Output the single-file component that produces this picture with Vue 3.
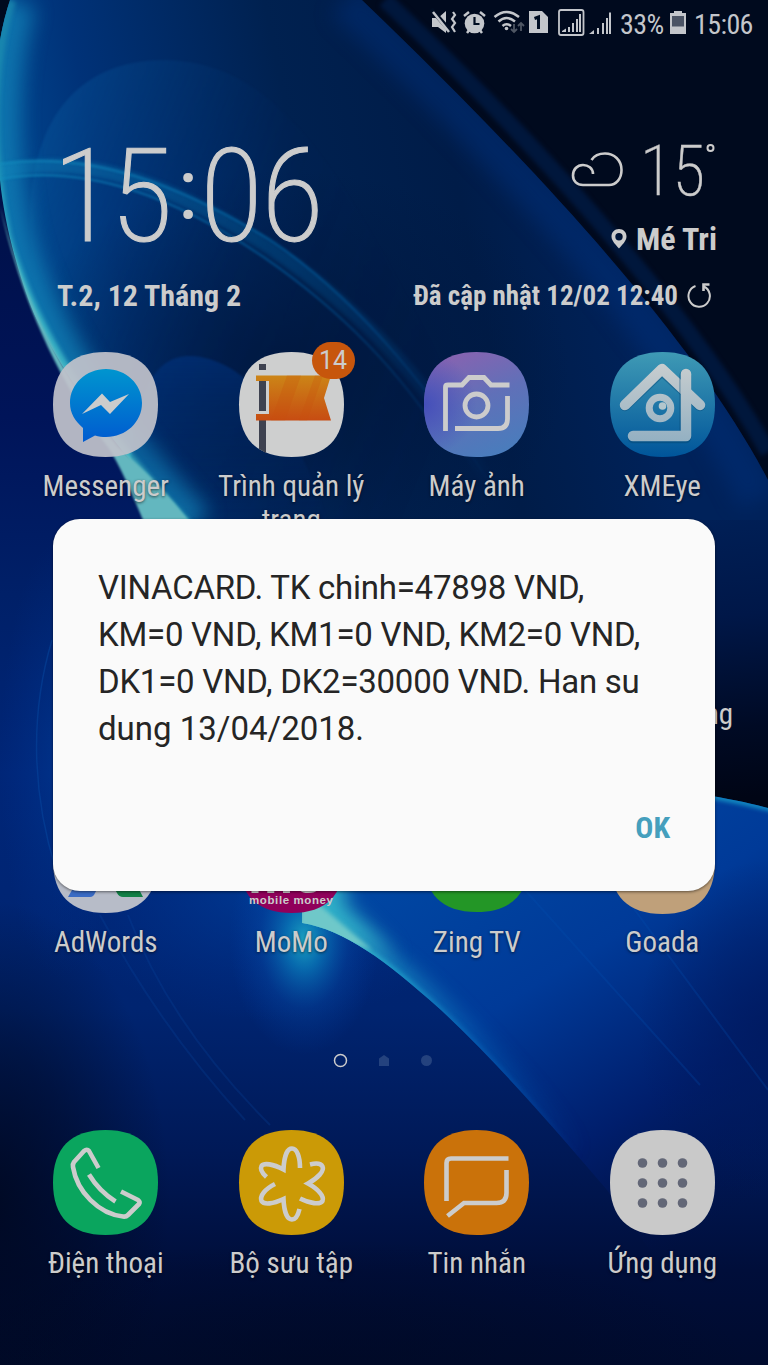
<script setup>
const SQ = 'M52.5 0C87 0 105 18 105 52.5S87 105 52.5 105 0 87 0 52.5 18 0 52.5 0Z'
const dots = [-20, 0, 20]
</script>

<template>
  <div class="phone">
    <svg class="wallpaper" width="768" height="1365" viewBox="0 0 768 1365" aria-hidden="true">
      <defs>
        <linearGradient id="lens" gradientUnits="userSpaceOnUse" x1="0" y1="240" x2="600" y2="120">
          <stop offset="0" stop-color="#004a94" /><stop offset=".18" stop-color="#003278" />
          <stop offset=".5" stop-color="#002150" /><stop offset=".75" stop-color="#001c48" /><stop offset="1" stop-color="#00225a" />
        </linearGradient>
        <linearGradient id="low" gradientUnits="userSpaceOnUse" x1="0" y1="180" x2="0" y2="1365">
          <stop offset="0" stop-color="#001048" /><stop offset=".2" stop-color="#001459" /><stop offset=".35" stop-color="#002068" />
          <stop offset=".5" stop-color="#002678" /><stop offset=".7" stop-color="#002470" />
          <stop offset=".82" stop-color="#001957" /><stop offset=".92" stop-color="#000e3a" /><stop offset="1" stop-color="#000b2e" />
        </linearGradient>
        <linearGradient id="strip" gradientUnits="userSpaceOnUse" x1="700" y1="520" x2="730" y2="800">
          <stop offset="0" stop-color="#001f56" /><stop offset=".35" stop-color="#001748" /><stop offset=".75" stop-color="#000a24" /><stop offset="1" stop-color="#000515" />
        </linearGradient>
        <linearGradient id="wave" gradientUnits="userSpaceOnUse" x1="400" y1="880" x2="640" y2="1270">
          <stop offset="0" stop-color="#0046a2" /><stop offset=".35" stop-color="#003a98" />
          <stop offset=".7" stop-color="#001e6c" /><stop offset="1" stop-color="#001048" stop-opacity="0" />
        </linearGradient>
        <linearGradient id="edge" gradientUnits="userSpaceOnUse" x1="310" y1="930" x2="580" y2="1160">
          <stop offset="0" stop-color="#4cc6cf" /><stop offset=".25" stop-color="#1f9cc8" /><stop offset=".55" stop-color="#0766b8" stop-opacity=".7" /><stop offset="1" stop-color="#0048a8" stop-opacity="0" />
        </linearGradient>
        <linearGradient id="rim" gradientUnits="userSpaceOnUse" x1="0" y1="0" x2="0" y2="530">
          <stop offset="0" stop-color="#1a86ac" stop-opacity=".8" /><stop offset=".25" stop-color="#1d93b4" stop-opacity=".8" /><stop offset=".5" stop-color="#37b0c4" /><stop offset="1" stop-color="#3fb4c2" />
        </linearGradient>
        <linearGradient id="arc" gradientUnits="userSpaceOnUse" x1="0" y1="170" x2="520" y2="480">
          <stop offset="0" stop-color="#1490c0" /><stop offset=".5" stop-color="#0068ac" stop-opacity=".8" /><stop offset="1" stop-color="#004a90" stop-opacity="0" />
        </linearGradient>
        <radialGradient id="glow"><stop offset="0" stop-color="#1fb0c8" /><stop offset=".25" stop-color="#0a82c0" stop-opacity=".8" /><stop offset=".6" stop-color="#0650b0" stop-opacity=".35" /><stop offset="1" stop-color="#0040a8" stop-opacity="0" /></radialGradient>
        <radialGradient id="halo"><stop offset="0" stop-color="#0048a8" stop-opacity=".7" /><stop offset="1" stop-color="#0038a0" stop-opacity="0" /></radialGradient>
        <radialGradient id="night"><stop offset="0" stop-color="#000820" stop-opacity=".9" /><stop offset=".5" stop-color="#000820" stop-opacity=".5" /><stop offset="1" stop-color="#000820" stop-opacity="0" /></radialGradient>
        <radialGradient id="navy"><stop offset="0" stop-color="#001a60" stop-opacity=".8" /><stop offset="1" stop-color="#001a60" stop-opacity="0" /></radialGradient>
        <radialGradient id="shade"><stop offset="0" stop-color="#00173e" /><stop offset="1" stop-color="#00173e" stop-opacity="0" /></radialGradient>
        <linearGradient id="inner" x1="0" y1="0" x2="1" y2=".4"><stop offset="0" stop-color="#0a62a8" stop-opacity=".45" /><stop offset=".5" stop-color="#002a66" stop-opacity=".1" /><stop offset="1" stop-color="#001a44" stop-opacity="0" /></linearGradient>
        <linearGradient id="bump" x1="0" y1="0" x2="0" y2="1"><stop offset="0" stop-color="#00388a" stop-opacity=".5" /><stop offset="1" stop-color="#002a66" stop-opacity="0" /></linearGradient>
        <clipPath id="lensClip"><path d="M10 0C-10 60 -12 150 5 235C30 330 90 420 190 530H768V480C700 350 560 190 362 0Z" /></clipPath>
        <clipPath id="waveClip"><path d="M302 860V923C345 930 385 960 441 1010C500 1065 560 1135 607 1190C650 1250 700 1320 720 1365H768V808C750 803 730 799 700 794V860Z" /></clipPath>
        <filter id="b1" color-interpolation-filters="sRGB"><feGaussianBlur stdDeviation=".8" /></filter>
        <filter id="b2" x="-20%" y="-20%" width="140%" height="140%" color-interpolation-filters="sRGB"><feGaussianBlur stdDeviation="2" /></filter>
        <filter id="b8" x="-40%" y="-40%" width="180%" height="180%" color-interpolation-filters="sRGB"><feGaussianBlur stdDeviation="10" /></filter>
      </defs>
      <rect width="768" height="1365" fill="#000a1e" />
      <path d="M0 180H190V350H700V700H768V1365H0Z" fill="url(#low)" />
      <path d="M362 0C560 190 700 350 768 480V530H768V0Z" fill="#000a1e" />
      <path d="M385 0C560 165 700 330 768 452" fill="none" stroke="#00173c" stroke-width="16" filter="url(#b2)" />
      <path d="M10 0C-10 60 -12 150 5 235C30 330 90 420 190 530H768V480C700 350 560 190 362 0Z" fill="url(#lens)" />
      <g clip-path="url(#lensClip)">
        <path d="M345 0C545 190 685 350 758 500" fill="none" stroke="#00307a" stroke-width="40" opacity=".5" filter="url(#b8)" />
        <ellipse cx="290" cy="370" rx="280" ry="200" fill="url(#shade)" />
        <path d="M30 230C28 130 70 60 165 60C270 62 330 150 430 340L520 530H160C80 460 32 340 30 230Z" fill="url(#inner)" filter="url(#b1)" />
        <path d="M10 0C-10 60 -12 150 5 235C30 330 90 420 190 530" fill="none" stroke="#1283b8" stroke-width="54" opacity=".75" filter="url(#b8)" />
        <path d="M10 0C-10 60 -12 150 5 235C30 330 90 420 190 530" fill="none" stroke="url(#rim)" stroke-width="12" filter="url(#b2)" />
        <path d="M0 172C90 150 180 190 270 248C360 310 430 380 500 500" fill="none" stroke="url(#arc)" stroke-width="14" opacity=".4" filter="url(#b2)" />
        <path d="M0 164C90 150 180 185 270 240C360 300 440 400 500 500M0 179C90 163 180 200 265 258C340 310 400 370 450 450" fill="none" stroke="url(#arc)" stroke-width="2.500" opacity=".6" filter="url(#b1)" />
        <path d="M128 530C128 400 150 356 190 356C250 358 300 430 330 530Z" fill="url(#bump)" filter="url(#b1)" />
      </g>
      <rect x="700" y="520" width="68" height="290" fill="url(#strip)" />
      <path d="M0 180C8 260 45 365 110 450C122 470 134 498 147 522L100 560H0Z" fill="url(#low)" />
      <path d="M0 205C12 265 45 365 110 450C122 470 134 498 147 530H196C170 495 140 465 118 447C60 375 20 290 0 205Z" fill="#63b7bf" filter="url(#b1)" />
      <ellipse cx="60" cy="760" rx="60" ry="220" fill="url(#halo)" opacity=".5" />
      <path d="M52 640C28 720 34 800 56 870" fill="none" stroke="#0648a0" stroke-width="1.500" opacity=".5" />
      <ellipse cx="270" cy="890" rx="220" ry="130" fill="url(#halo)" opacity=".8" />
      <ellipse cx="304" cy="940" rx="75" ry="115" fill="url(#glow)" opacity=".9" />
      <path d="M302 860V923C345 930 385 960 441 1010C500 1065 560 1135 607 1190C650 1250 700 1320 720 1365H768V808C750 803 730 799 700 794V860Z" fill="url(#wave)" />
      <g clip-path="url(#waveClip)">
        <path d="M302 923C345 930 385 960 441 1010C500 1065 560 1135 607 1190" fill="none" stroke="url(#edge)" stroke-width="22" opacity=".75" filter="url(#b8)" />
        <path d="M302 923C345 930 385 960 441 1010C500 1065 560 1135 607 1190" fill="none" stroke="url(#edge)" stroke-width="5" filter="url(#b2)" />
        <path d="M298 860H345L345 905L395 955L304 925Z" fill="#2fb0c8" filter="url(#b8)" />
        <path d="M300 865L320 905L372 950L300 928Z" fill="#6fc8c9" filter="url(#b2)" />
        <path d="M700 794C730 799 750 803 780 811" fill="none" stroke="#128bc2" stroke-width="6" filter="url(#b2)" />
        <ellipse cx="768" cy="1030" rx="130" ry="170" fill="url(#navy)" />
        <path d="M525 890L700 1085M620 890L768 1090" stroke="#0050b0" stroke-width="2" opacity=".25" />
      </g>
      <path d="M100 915C140 990 190 1060 245 1120M128 915C160 1000 215 1070 270 1125" fill="none" stroke="#0648a0" stroke-width="2" opacity=".25" />
      <ellipse cx="-10" cy="1200" rx="180" ry="300" fill="url(#night)" />
      <ellipse cx="330" cy="1370" rx="420" ry="130" fill="url(#night)" opacity=".6" />
    </svg>

    <header class="status">
      <svg width="186" height="30" viewBox="430 8 186 30" fill="#c3c6cb">
        <path d="M432 18h6l8-7v22l-8-6h-6z" />
        <path d="M431 9l21 24" stroke="#000d22" stroke-width="4.500" /><path d="M433 12l16 20" stroke="#c3c6cb" stroke-width="2.500" />
        <path d="M453 12l2 3-3 4 3 4-3 4 3 5" fill="none" stroke="#c3c6cb" stroke-width="2.200" />
        <circle cx="474.500" cy="23.500" r="9.800" /><path d="M464 16l5-4M485 16l-5-4M467 33l3-4M482 33l-3-4" stroke="#c3c6cb" stroke-width="2.500" /><path d="M474.500 17v7h5" fill="none" stroke="#000d22" stroke-width="2.200" />
        <g fill="none" stroke="#c3c6cb" stroke-width="2.500"><path d="M494.500 17q12-10 24.500 0M498.500 21.500q8-7 16.500 0M502.500 26q4-3.500 8.500 0" /></g><circle cx="506.500" cy="28.500" r="1.800" />
        <path d="M514 24v8m-3-3l3 3 3-3M521 31v-8m-3 3l3-3 3 3" fill="none" stroke="#4e5663" stroke-width="1.800" />
        <path d="M529 11h13l6 6v16h-19z" /><path d="M534.500 18.500l4-1.500v12" fill="none" stroke="#000d22" stroke-width="3" />
        <rect x="559" y="10" width="24.500" height="25" rx="2" fill="none" stroke="#c3c6cb" stroke-width="1.800" />
        <path d="M562 32v-1l4-2.500V32zm6 0v-5h2v5zm4 0V23h2v9zm4 0V19h2v13zm3 0V14h2v18z" />
        <path d="M589 34l5-4v4zm8 0v-6h2v6zm5 0v-11h2v11zm4 0V18h2v16zm3 0V12.500h2V34z" />
      </svg>
      <span class="cond pct">33%</span>
      <svg class="bat" width="16" height="23" viewBox="0 0 16 23"><path d="M4 0h8v2h4v21H0V2h4z" fill="#c3c6cb" /><path d="M2 5h12v10.500H2z" fill="#4b5465" /></svg>
      <span class="cond time">15:06</span>
    </header>

    <section class="widget">
      <div class="left">
        <svg class="clock" width="290" height="130" viewBox="40 130 290 130"><text y="241"><tspan x="52.500 110">15</tspan><tspan class="colon" x="177.500" y="219">:</tspan><tspan x="200 261" y="241">06</tspan></text></svg>
        <div class="cond date">T.2, 12 Tháng 2</div>
      </div>
      <div class="right">
        <svg class="temp" width="160" height="80" viewBox="560 130 160 80">
          <path d="M593 174C593 168 588 165 583 165C577 165 573 169.500 573 175.500C573 181 577 185 583 185H609C616 185 621.500 179 621.500 170C621.500 160 614 153.500 605 153.500C599 153.500 594 156 591.500 160" />
          <text x="640" y="195" textLength="65" lengthAdjust="spacingAndGlyphs">15</text><circle cx="710.500" cy="148" r="3" />
        </svg>
        <div class="place"><svg width="16" height="20" viewBox="0 0 16 20"><path d="M8 0C3.500 0 .5 3.200.5 7.500C.5 12 5 16 8 19.500C11 16 15.500 12 15.500 7.500C15.500 3.200 12.500 0 8 0Zm0 4a3.700 3.700 0 1 1 0 7.400A3.700 3.700 0 0 1 8 4Z" fill="#ccc" fill-rule="evenodd" /></svg><span class="cond">Mé Tri</span></div>
        <div class="updated"><span class="cond">Đã cập nhật 12/02 12:40</span><svg width="25" height="26" viewBox="0 0 25 26" fill="none" stroke="#ccc" stroke-width="2"><path d="M8.500 3A10.700 10.700 0 1 0 17 3.500" /><path d="M22.500 1.500H16.500V8" stroke-width="2.600" /></svg></div>
      </div>
    </section>

    <main class="grid">
      <div class="app">
        <svg class="icon" viewBox="0 0 105 105"><defs><linearGradient id="ms" x1="0" y1="0" x2="0" y2="1"><stop stop-color="#0095cf" /><stop offset="1" stop-color="#005bd0" /></linearGradient></defs>
          <path :d="SQ" fill="#c0c2ca" opacity=".93" /><path d="M53 17C33 17 17 32 17 51C17 61 22 69 30 76V90L42 83.500C46 84.500 49 85 53 85C73 85 89 70 89 51S73 17 53 17Z" fill="url(#ms)" /><path d="M29 62L49 41.500L57 50L76 42L57 62L48 53Z" fill="#ccc" /></svg>
        <span class="cond label">Messenger</span>
      </div>
      <div class="app">
        <svg class="icon" viewBox="0 0 105 105"><defs><linearGradient id="fl" x1="0" y1="0" x2="0" y2="1"><stop stop-color="#cc8517" /><stop offset="1" stop-color="#c74c12" /></linearGradient></defs>
          <path :d="SQ" fill="#cecfcf" /><path d="M20 12h7v6h-7zM20 28h7v31h-7zM20 68h7v33l-7-4z" fill="#3e4250" /><path d="M17 23.500H92L85 46L92 68.500H17V62H30V29H17Z" fill="url(#fl)" /><path d="M48 23.500H62L46 68.500H32ZM76 23.500H84L68 68.500H60Z" fill="#c8500c" opacity=".25" /></svg>
        <b class="badge">14</b>
        <span class="cond label two">Trình quản lý<br>trang</span>
      </div>
      <div class="app">
        <svg class="icon" viewBox="0 0 105 105"><defs><linearGradient id="cm" x1=".2" y1="0" x2=".6" y2="1"><stop stop-color="#8a62b0" /><stop offset=".5" stop-color="#6070b8" /><stop offset="1" stop-color="#4a7cbc" /></linearGradient><radialGradient id="cl" cx="0" cy=".5" r=".5"><stop stop-color="#444fba" /><stop offset="1" stop-color="#444fba" stop-opacity="0" /></radialGradient></defs>
          <path :d="SQ" fill="url(#cm)" /><path :d="SQ" fill="url(#cl)" /><g fill="none" stroke="#ccc" stroke-width="4.800"><path d="M21.500 79V35Q21.500 33 24 33H38L45 25.500H60L67 33H85.500M83.500 44V67Q83.500 76.500 74 76.500H31" /><circle cx="52.500" cy="53.500" r="11.500" /></g></svg>
        <span class="cond label">Máy ảnh</span>
      </div>
      <div class="app">
        <svg class="icon" viewBox="0 0 105 105"><defs><linearGradient id="xm" x1="0" y1="0" x2="0" y2="1"><stop stop-color="#3f9ab5" /><stop offset="1" stop-color="#00559a" /></linearGradient><linearGradient id="xs" gradientUnits="userSpaceOnUse" x1="0" y1="10" x2="0" y2="90"><stop stop-color="#c9cecf" /><stop offset="1" stop-color="#93b0c2" /></linearGradient></defs>
          <path :d="SQ" fill="url(#xm)" /><g fill="none" stroke-linecap="round" stroke-linejoin="round" stroke-width="10.500"><path d="M15 54L52 19L90 54M76 24V86H23" stroke="#064b7a" opacity=".45" /><path d="M15 53L52 17L90 53" stroke="url(#xs)" /><path d="M75 24V85H24" stroke="#064b7a" opacity=".3" stroke-width="12" /><g stroke="url(#xs)"><path d="M76 22V84H23" /><circle cx="50" cy="56" r="10.800" stroke-width="7" /></g></g><circle cx="52.500" cy="54" r="3.800" fill="#b3c6cd" /></svg>
        <span class="cond label">XMEye</span>
      </div>
      <div class="app"></div><div class="app"></div><div class="app"></div>
      <div class="app"><span class="cond tail">ng</span></div>
      <div class="app">
        <svg class="icon" viewBox="0 0 105 105"><path :d="SQ" fill="#b7bcc8" /><path d="M26 70H50L42 85Q40.500 89 37 89H15Z" fill="#3a6bc4" /><path d="M56 70H80L90 89H70Q66 89 64 85Z" fill="#118046" /></svg>
        <span class="cond label">AdWords</span>
      </div>
      <div class="app">
        <svg class="icon" viewBox="0 0 105 105"><path :d="SQ" fill="#90005b" /><text x="9" y="84.500" class="momo" textLength="76" lengthAdjust="spacingAndGlyphs">mo</text><text x="10" y="96" class="mm" textLength="84" lengthAdjust="spacing">mobile money</text></svg>
        <span class="cond label">MoMo</span>
      </div>
      <div class="app">
        <svg class="icon" viewBox="0 0 105 105"><path :d="SQ" fill="#239626" transform="translate(0 -1)" /></svg>
        <span class="cond label">Zing TV</span>
      </div>
      <div class="app">
        <svg class="icon" viewBox="0 0 105 105"><path :d="SQ" fill="#bfa07a" transform="translate(0 1)" /></svg>
        <span class="cond label">Goada</span>
      </div>
    </main>

    <svg class="pager" width="768" height="20" viewBox="0 0 768 20"><circle cx="340.500" cy="10.500" r="6" fill="none" stroke="#ccc" stroke-width="1.500" /><path d="M379 8.500L384 5L389 8.500V16H379Z" fill="#24427e" /><circle cx="426.500" cy="10.500" r="5.500" fill="#24427e" /></svg>

    <footer class="dock">
      <div class="app">
        <svg class="icon" viewBox="0 0 105 105"><path :d="SQ" fill="#0aa55e" /><g fill="none" stroke="#ccc" stroke-width="4.600" stroke-linejoin="round"><path d="M45.500 38L36 21Q34 18.500 31 21L21 32Q19.500 34 20 37C24 62 46 84 70 86.500Q73 87 75 85L86 74Q87.500 72 85 70L68 61.500" /><path d="M36 44.500Q46 61 62.500 71.500" /></g></svg>
        <span class="cond label">Điện thoại</span>
      </div>
      <div class="app">
        <svg class="icon" viewBox="0 0 105 105"><path :d="SQ" fill="#cb9a06" /><path d="M61 38C61 27 58 18.500 53 18.500C48 18.500 45 27 44.500 39.500C34 34 25 32.500 22.500 36C21 39 23 43 27.500 47M71 34.500C77 33 82 33.500 83.500 36.500C85.500 41 79 48 69 53.500C79 59 85.500 66 83.500 71C81 75 71 73.500 61 68.500M60.500 79C59 85.500 56.500 89.500 53 89.500C48 89.500 45 81 44.500 69C34 74 25 75 22.500 71C20.500 66 26 59 36 54" fill="none" stroke="#ccc" stroke-width="4.600" /></svg>
        <span class="cond label">Bộ sưu tập</span>
      </div>
      <div class="app">
        <svg class="icon" viewBox="0 0 105 105"><path :d="SQ" fill="#ca720a" /><path d="M22.500 71V33Q22.500 28.500 27 28.500H84.500M82.500 40V63Q82.500 73 72.500 73H40L23.500 86" fill="none" stroke="#ccc" stroke-width="4.600" /></svg>
        <span class="cond label">Tin nhắn</span>
      </div>
      <div class="app">
        <svg class="icon" viewBox="0 0 105 105"><path :d="SQ" fill="#c9c9c9" /><g fill="#636777"><template v-for="y in dots" :key="y"><circle v-for="x in dots" :key="x" :cx="52.500 + x" :cy="53 + y" r="4.800" /></template></g></svg>
        <span class="cond label">Ứng dụng</span>
      </div>
    </footer>

    <div class="dialog" role="dialog">
      <p><span class="tight">VINACARD. TK chinh=47898 VND,<br>KM=0 VND, KM1=0 VND, KM2=0 VND,<br>DK1=0 VND, DK2=30000 VND. Han su</span><br>dung 13/04/2018.</p>
      <button class="cond ok">OK</button>
    </div>
  </div>
</template>

<style>
body { margin: 0; background: #000b33; }
</style>
<style scoped>
.phone { position: relative; z-index: 0; width: 768px; height: 1365px; overflow: hidden; font-family: Roboto, "Noto Sans", sans-serif; color: #ccc; display: flex; flex-direction: column; }
.wallpaper { position: absolute; inset: 0; z-index: -1; }
.cond { font-stretch: 75%; white-space: nowrap; }
.status { height: 46px; box-sizing: border-box; padding: 2px 0 0 430px; display: flex; align-items: center; font-size: 28px; letter-spacing: -.6px; color: #c3c6cb; flex: none; }
.status > svg:first-child { margin-top: -2px; }
.pct { margin-left: 4px; width: 44px; }
.bat { margin: 0 8px 0 6px; flex: none; position: relative; top: -2px; }
.widget { height: 306px; flex: none; display: flex; justify-content: space-between; padding: 84px 48px 0 40px; box-sizing: border-box; }
.clock { display: block; overflow: visible; }
.clock text { font: 200 130px Roboto, sans-serif; font-stretch: 75%; fill: #ccc; stroke: #ccc; stroke-width: 1.100; }
.clock .colon { font-size: 86px; font-weight: 400; stroke: none; }
.date { font-weight: 700; font-size: 30px; line-height: 34px; margin: 19px 0 0 17px; }
.right { display: flex; flex-direction: column; align-items: flex-end; }
.temp { display: block; overflow: visible; fill: none; stroke: #ccc; stroke-width: 2.600; }
.temp text { font: 200 71px Roboto, sans-serif; font-stretch: 75%; fill: #ccc; stroke-width: .4; }
.temp circle { stroke-width: 2; }
.place { display: flex; align-items: center; gap: 9px; font-weight: 700; font-size: 32px; line-height: 36px; margin: 11px 3px 0 0; }
.updated { display: flex; align-items: center; gap: 9px; font-weight: 700; font-size: 27px; line-height: 32px; margin: 23px 8px 0 0; }
.grid { height: 684px; flex: none; display: grid; grid-template-columns: repeat(4, 185.500px); grid-auto-rows: 228px; padding-left: 13px; }
.app { position: relative; display: flex; flex-direction: column; align-items: center; }
.icon { width: 105px; height: 105px; flex: none; overflow: visible; }
.label { font-size: 29px; line-height: 34px; margin-top: 12px; text-align: center; text-shadow: 0 1px 3px rgba(0,0,0,.6); }
.badge { position: absolute; left: 113px; top: -10px; width: 43px; height: 37px; border-radius: 20px; background: #c7560c; font-weight: 400; font-size: 25px; line-height: 37px; text-align: center; }
.tail { align-self: flex-end; margin: 117px 22px 0 0; font-size: 29px; line-height: 34px; }
.momo { font: 700 50px "Liberation Sans", sans-serif; fill: #ccc; }
.mm { font: 700 11.500px "Liberation Sans", sans-serif; fill: #ccc; }
.pager { flex: none; margin-top: 14px; display: block; }
.dock { margin-top: 60px; display: grid; grid-template-columns: repeat(4, 185.500px); padding-left: 13px; }
.dock .label { margin-top: 11px; }
.dialog { position: absolute; left: 53px; top: 519px; width: 662px; height: 372px; box-sizing: border-box; padding: 45px 45px 0; border-radius: 27px; background: #fafafa; box-shadow: 0 1px 3px rgba(0,0,0,.5); display: flex; flex-direction: column; }
.dialog p { margin: 0; font-size: 33px; line-height: 47px; color: #252525; white-space: nowrap; }
.tight { letter-spacing: -.25px; }
.ok { align-self: flex-end; margin-top: 59px; padding: 0; border: 0; background: none; color: #459fbd; font-family: inherit; font-weight: 700; font-size: 30px; line-height: 34px; }
</style>
